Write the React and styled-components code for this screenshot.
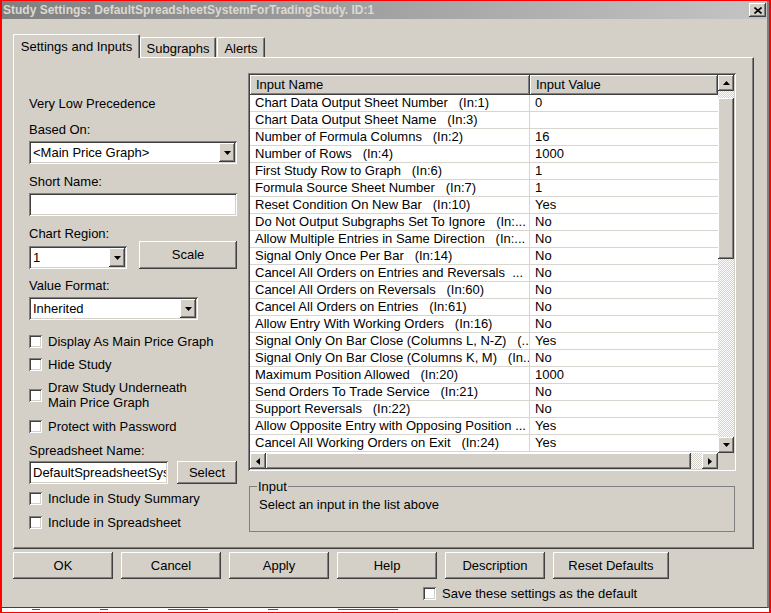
import React from "react";
import styled, { createGlobalStyle, css } from "styled-components";

const C = { face: "#d4d0c8", shadow: "#808080", dark: "#404040", light: "#ffffff" };

const Global = createGlobalStyle`
  html, body { margin: 0; padding: 0; background: #fff; }
  body {
    width: 771px; height: 613px; overflow: hidden;
    font-family: "Liberation Sans", Arial, sans-serif; font-size: 13px; color: #000;
  }
  * { box-sizing: border-box; }
`;

const raised = css`
  box-shadow: inset -1px -1px ${C.dark}, inset 1px 1px ${C.light},
    inset -2px -2px ${C.shadow}, inset 2px 2px ${C.face};
`;
const sunken = css`
  box-shadow: inset 1px 1px ${C.shadow}, inset -1px -1px ${C.light},
    inset 2px 2px ${C.dark}, inset -2px -2px ${C.face};
`;
const checker = css`
  background-color: ${C.face};
  background-image: repeating-conic-gradient(#ffffff 0 25%, ${C.face} 0 50%);
  background-size: 2px 2px;
`;

const Page = styled.div`
  width: 771px; height: 613px;
  border: 1px solid #ff0000; border-left-width: 2px; border-right-width: 2px;
  display: flex; flex-direction: column; background: #fff;
`;
const Window = styled.div`
  height: 607px; flex: none;
  background: ${C.face};
  border-right: 2px solid ${C.shadow};
  border-bottom: 1px solid ${C.dark};
  display: flex; flex-direction: column;
`;
const Underlay = styled.div`
  flex: 1; background: #fff;
  display: flex; gap: 60px; padding-left: 30px;
`;
const Frag = styled.span`
  width: ${(p) => p.$w}px; height: 2px; border-top: 1px solid #555; margin-top: 1px;
`;

const TitleBar = styled.div`
  height: 18px; flex: none;
  background: linear-gradient(to right, #808080, #c4c4c4);
  display: flex; align-items: center; justify-content: space-between;
  padding: 0 1px 0 1px;
`;
const TitleText = styled.span`
  color: #dcd9d2; font-weight: bold; font-size: 12px;
  font-family: "Liberation Sans", Arial, sans-serif;
`;
const CloseBtn = styled.div`
  width: 17px; height: 14px; background: ${C.face}; ${raised};
  display: flex; align-items: center; justify-content: center;
`;

const Body = styled.div`
  flex: 1; display: flex; flex-direction: column;
  padding: 15px 13px 0 11px;
`;
const TabStrip = styled.div`
  display: flex; align-items: flex-end; height: 23px; position: relative; z-index: 1;
`;
const Tab = styled.div`
  width: ${(p) => p.$w}px;
  height: ${(p) => (p.$active ? 24 : 20)}px;
  margin-bottom: ${(p) => (p.$active ? -1 : 0)}px;
  margin-left: ${(p) => p.$ml || 0}px;
  background: ${C.face};
  border-top: 1px solid ${C.light}; border-left: 1px solid ${C.light};
  border-right: 1px solid ${C.dark};
  border-top-left-radius: 2px; border-top-right-radius: 2px;
  box-shadow: inset -1px 0 ${C.shadow};
  display: flex; justify-content: center;
  padding-top: ${(p) => (p.$active ? 4 : 3)}px;
  line-height: 15px; white-space: nowrap;
`;
const Panel = styled.div`
  height: 492px; flex: none;
  background: ${C.face};
  border-top: 1px solid ${C.light}; border-left: 1px solid ${C.light};
  border-right: 1px solid ${C.dark}; border-bottom: 1px solid ${C.dark};
  box-shadow: inset -1px -1px ${C.shadow};
  display: flex;
`;
const LeftCol = styled.div`
  width: 223px; flex: none; padding: 38px 0 0 15px;
  display: flex; flex-direction: column;
`;
const Label = styled.div`
  line-height: 15px; height: 15px; margin-top: ${(p) => p.$mt || 0}px; white-space: nowrap;
`;
const Row = styled.div`
  display: flex; align-items: flex-end; justify-content: space-between;
  width: 208px; margin-top: ${(p) => p.$mt || 0}px;
`;
const Field = styled.div`
  width: ${(p) => p.$w}px; height: 23px; flex: none;
  margin-top: ${(p) => p.$mt || 0}px;
  background: #fff; ${sunken};
  padding: 2px; display: flex; align-items: center;
`;
const FieldText = styled.span`
  flex: 1; padding-left: 2px; line-height: 19px; white-space: nowrap; overflow: hidden;
`;
const DropBtn = styled.div`
  width: 16px; height: 19px; flex: none; background: ${C.face}; ${raised};
  display: flex; align-items: center; justify-content: center;
`;
const Button = styled.div`
  width: ${(p) => p.$w}px; height: ${(p) => p.$h || 27}px; flex: none;
  background: ${C.face}; ${raised};
  display: flex; align-items: center; justify-content: center;
  padding-bottom: 1px; white-space: nowrap;
`;
const CheckRow = styled.div`
  display: flex; align-items: center; gap: 6px;
  margin-top: ${(p) => p.$mt || 0}px;
  padding-left: ${(p) => p.$pl || 0}px;
  line-height: 15px;
`;
const Box = styled.span`
  width: 13px; height: 13px; flex: none; background: #fff; ${sunken};
`;

const RightCol = styled.div`
  flex: none; padding-top: 15px; margin-left: 11px;
  display: flex; flex-direction: column;
`;
const TableFrame = styled.div`
  width: 488px; height: 398px; background: #fff; ${sunken};
  padding: 2px;
  display: grid; grid-template-columns: 468px 16px; grid-template-rows: 378px 16px;
`;
const List = styled.div`
  display: flex; flex-direction: column; overflow: hidden;
`;
const HeadRow = styled.div`
  display: grid; grid-template-columns: 280px 188px; height: 20px; flex: none;
`;
const HeadCell = styled.div`
  background: ${C.face};
  box-shadow: inset -1px -1px ${C.dark}, inset 1px 1px ${C.light}, inset -2px -2px ${C.shadow};
  padding: 2px 6px 0; line-height: 15px; white-space: nowrap;
`;
const DataRow = styled.div`
  display: grid; grid-template-columns: 280px 188px; height: 17px; flex: none;
  border-bottom: 1px solid #d8d5cf;
`;
const Cell = styled.div`
  padding-left: ${(p) => p.$pl}px; line-height: 16px; white-space: pre; overflow: hidden;
  border-right: ${(p) => (p.$sep ? "1px solid #d8d5cf" : "none")};
`;
const VScroll = styled.div`
  display: flex; flex-direction: column;
`;
const HScroll = styled.div`
  display: flex;
`;
const ArrowBtn = styled.div`
  width: 16px; height: 16px; flex: none; background: ${C.face}; ${raised};
  display: flex; align-items: center; justify-content: center;
`;
const Track = styled.div`
  ${checker};
  flex: ${(p) => (p.$size ? "none" : 1)};
  ${(p) => (p.$vertical ? `height: ${p.$size}px;` : `width: ${p.$size}px;`)}
`;
const Thumb = styled.div`
  flex: none; background: ${C.face}; ${raised};
  ${(p) => (p.$vertical ? `height: ${p.$size}px;` : `width: ${p.$size}px;`)}
`;
const Corner = styled.div`
  background: ${C.face};
`;
const Group = styled.fieldset`
  margin: 8px 0 0 1px; width: 486px; height: 53px;
  border: 1px solid ${C.shadow};
  padding: 3px 9px 0;
  min-inline-size: auto;
`;
const Legend = styled.legend`
  padding: 0 1px; margin-left: -2px; line-height: 15px;
`;
const GroupText = styled.div`
  line-height: 15px;
`;

const ButtonRow = styled.div`
  display: flex; gap: 8px; margin-top: 3px;
`;

const Tri = ({ dir }) => {
  const pts = {
    down: "0,0 7,0 3.5,4",
    up: "0,4 7,4 3.5,0",
    left: "4,0 4,7 0,3.5",
    right: "0,0 0,7 4,3.5",
  }[dir];
  const horiz = dir === "left" || dir === "right";
  return (
    <svg width={horiz ? 4 : 7} height={horiz ? 7 : 4} viewBox={horiz ? "0 0 4 7" : "0 0 7 4"}>
      <polygon points={pts} fill="#000" />
    </svg>
  );
};

const rows = [
  ["Chart Data Output Sheet Number   (In:1)", "0"],
  ["Chart Data Output Sheet Name   (In:3)", ""],
  ["Number of Formula Columns   (In:2)", "16"],
  ["Number of Rows   (In:4)", "1000"],
  ["First Study Row to Graph   (In:6)", "1"],
  ["Formula Source Sheet Number   (In:7)", "1"],
  ["Reset Condition On New Bar   (In:10)", "Yes"],
  ["Do Not Output Subgraphs Set To Ignore   (In:...", "No"],
  ["Allow Multiple Entries in Same Direction   (In:...", "No"],
  ["Signal Only Once Per Bar   (In:14)", "No"],
  ["Cancel All Orders on Entries and Reversals  ...", "No"],
  ["Cancel All Orders on Reversals   (In:60)", "No"],
  ["Cancel All Orders on Entries   (In:61)", "No"],
  ["Allow Entry With Working Orders   (In:16)", "No"],
  ["Signal Only On Bar Close (Columns L, N-Z)   (...", "Yes"],
  ["Signal Only On Bar Close (Columns K, M)   (In...", "No"],
  ["Maximum Position Allowed   (In:20)", "1000"],
  ["Send Orders To Trade Service   (In:21)", "No"],
  ["Support Reversals   (In:22)", "No"],
  ["Allow Opposite Entry with Opposing Position ...", "Yes"],
  ["Cancel All Working Orders on Exit   (In:24)", "Yes"],
];

const Check = ({ children, mt, pl }) => (
  <CheckRow $mt={mt} $pl={pl}>
    <Box />
    <span>{children}</span>
  </CheckRow>
);

const Select = ({ w, mt, children }) => (
  <Field $w={w} $mt={mt}>
    <FieldText>{children}</FieldText>
    <DropBtn>
      <Tri dir="down" />
    </DropBtn>
  </Field>
);

export default function App() {
  return (
    <>
      <Global />
      <Page>
        <Window>
          <TitleBar>
            <TitleText>Study Settings: DefaultSpreadsheetSystemForTradingStudy. ID:1</TitleText>
            <CloseBtn>
              <svg width="8" height="7" viewBox="0 0 8 7">
                <path d="M0.5 0.5 L7.5 6.5 M7.5 0.5 L0.5 6.5" stroke="#000" strokeWidth="1.6" />
              </svg>
            </CloseBtn>
          </TitleBar>
          <Body>
            <TabStrip>
              <Tab $active $w={127}>Settings and Inputs</Tab>
              <Tab $w={76}>Subgraphs</Tab>
              <Tab $w={48} $ml={1}>Alerts</Tab>
            </TabStrip>
            <Panel>
              <LeftCol>
                <Label>Very Low Precedence</Label>
                <Label $mt={11}>Based On:</Label>
                <Select w={208} mt={4}>&lt;Main Price Graph&gt;</Select>
                <Label $mt={10}>Short Name:</Label>
                <Field $w={208} $mt={4} />
                <Label $mt={10}>Chart Region:</Label>
                <Row>
                  <Select w={98}>1</Select>
                  <Button $w={98} $h={28}>Scale</Button>
                </Row>
                <Label $mt={9}>Value Format:</Label>
                <Select w={169} mt={4}>Inherited</Select>
                <Check mt={14}>Display As Main Price Graph</Check>
                <Check mt={8}>Hide Study</Check>
                <Check mt={8}>
                  Draw Study Underneath
                  <br />
                  Main Price Graph
                </Check>
                <Check mt={9}>Protect with Password</Check>
                <Label $mt={9}>Spreadsheet Name:</Label>
                <Row $mt={3}>
                  <Field $w={139}>
                    <FieldText>DefaultSpreadsheetSystemForTradingStudy</FieldText>
                  </Field>
                  <Button $w={60} $h={23}>Select</Button>
                </Row>
                <Check mt={7}>Include in Study Summary</Check>
                <Check mt={9}>Include in Spreadsheet</Check>
              </LeftCol>
              <RightCol>
                <TableFrame>
                  <List>
                    <HeadRow>
                      <HeadCell>Input Name</HeadCell>
                      <HeadCell>Input Value</HeadCell>
                    </HeadRow>
                    {rows.map(([name, value], i) => (
                      <DataRow key={i}>
                        <Cell $pl={5} $sep>{name}</Cell>
                        <Cell $pl={5}>{value}</Cell>
                      </DataRow>
                    ))}
                  </List>
                  <VScroll>
                    <ArrowBtn>
                      <Tri dir="up" />
                    </ArrowBtn>
                    <Track $vertical $size={7} />
                    <Thumb $vertical $size={161} />
                    <Track $vertical />
                    <ArrowBtn>
                      <Tri dir="down" />
                    </ArrowBtn>
                  </VScroll>
                  <HScroll>
                    <ArrowBtn>
                      <Tri dir="left" />
                    </ArrowBtn>
                    <Thumb $size={425} />
                    <Track />
                    <ArrowBtn>
                      <Tri dir="right" />
                    </ArrowBtn>
                  </HScroll>
                  <Corner />
                </TableFrame>
                <Group>
                  <Legend>Input</Legend>
                  <GroupText>Select an input in the list above</GroupText>
                </Group>
              </RightCol>
            </Panel>
            <ButtonRow>
              <Button $w={100}>OK</Button>
              <Button $w={100}>Cancel</Button>
              <Button $w={100}>Apply</Button>
              <Button $w={100}>Help</Button>
              <Button $w={100}>Description</Button>
              <Button $w={116}>Reset Defaults</Button>
            </ButtonRow>
            <Check mt={7} pl={410}>Save these settings as the default</Check>
          </Body>
        </Window>
        <Underlay>
          <Frag $w={8} />
          <Frag $w={8} />
          <Frag $w={40} />
          <Frag $w={10} />
          <Frag $w={60} />
        </Underlay>
      </Page>
    </>
  );
}
